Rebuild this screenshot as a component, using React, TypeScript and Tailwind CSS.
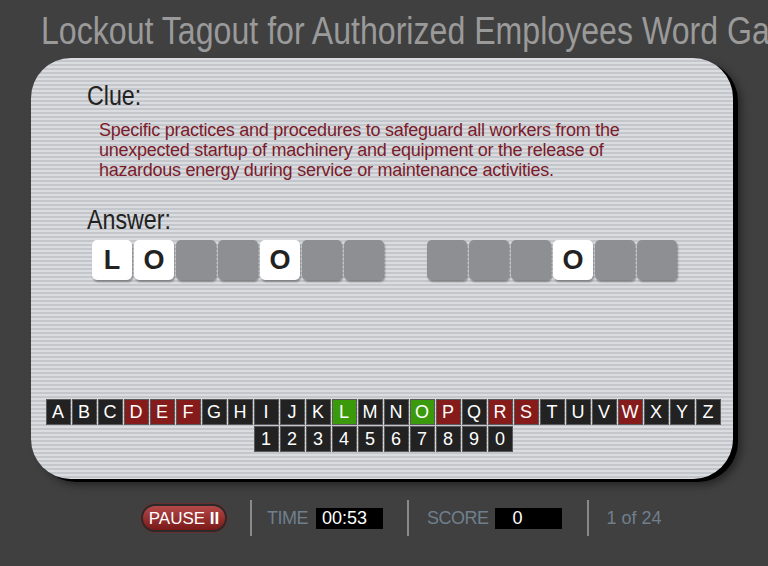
import React from 'react';

const clue =
  'Specific practices and procedures to safeguard all workers from the unexpected startup of machinery and equipment or the release of hazardous energy during service or maintenance activities.';

// answer words, null = still hidden
const words: (string | null)[][] = [
  ['L', 'O', null, null, 'O', null, null],
  [null, null, null, 'O', null, null],
];

const wrong = ['D', 'E', 'F', 'P', 'R', 'S', 'W'];
const right = ['L', 'O'];
const letters = 'ABCDEFGHIJKLMNOPQRSTUVWXYZ'.split('');
const digits = '1234567890'.split('');

const Key: React.FC<{ ch: string }> = ({ ch }) => {
  const bg = right.includes(ch) ? 'bg-[#3a9a0c]' : wrong.includes(ch) ? 'bg-[#861b1b]' : 'bg-[#222222]';
  return (
    <div className={`w-[25px] h-[26px] ${bg} border border-[#5a5a5a] flex items-center justify-center text-white text-[18px] leading-none`}>
      {ch}
    </div>
  );
};

const Tile: React.FC<{ ch: string | null }> = ({ ch }) =>
  ch ? (
    <div className="w-[40px] h-[40px] rounded-[5px] bg-white shadow-[1px_2px_2px_rgba(0,0,0,0.35)] flex items-center justify-center text-[27px] font-bold text-[#222]">
      {ch}
    </div>
  ) : (
    <div className="w-[40px] h-[40px] rounded-[5px] bg-[#8d8f92] shadow-[1px_2px_2px_rgba(0,0,0,0.35)]" />
  );

export default function App() {
  return (
    <div className="w-[768px] h-[566px] bg-[#404040] overflow-hidden font-['Liberation_Sans',Arial,sans-serif]">
      {/* title, narrow face */}
      <div className="h-[58px] pl-[41px] pt-[10px] whitespace-nowrap overflow-hidden">
        <span className="inline-block origin-left scale-x-[0.845] text-[38px] leading-[42px] text-[#9a9a9a]">
          Lockout Tagout for Authorized Employees Word Game
        </span>
      </div>

      {/* game board */}
      <div className="ml-[31px] w-[702px] h-[421px] rounded-[40px] shadow-[5px_3px_0_#000,8px_6px_8px_rgba(0,0,0,0.45)] bg-[repeating-linear-gradient(180deg,#dadcdf_0px,#dadcdf_2px,#c3c6ca_2px,#c3c6ca_4px)] pt-[23px] pl-[56px] flex flex-col">
        <div className="origin-left scale-x-[0.86] text-[27px] leading-[30px] text-[#222]">Clue:</div>
        <p className="mt-[9px] ml-[12px] w-[560px] text-[18px] tracking-[-0.25px] leading-[20px] text-[#7b1a2a]">{clue}</p>
        <div className="mt-[25px] origin-left scale-x-[0.86] text-[27px] leading-[30px] text-[#222]">Answer:</div>
        <div className="mt-[5px] ml-[5px] flex gap-[43px]">
          {words.map((w, i) => (
            <div key={i} className="flex gap-[2px]">
              {w.map((ch, j) => (
                <Tile key={j} ch={ch} />
              ))}
            </div>
          ))}
        </div>

        {/* letter picker */}
        <div className="mt-[119px] -ml-[54px] flex flex-col items-center gap-px">
          <div className="flex gap-px">
            {letters.map((c) => (
              <Key key={c} ch={c} />
            ))}
          </div>
          <div className="flex gap-px">
            {digits.map((c) => (
              <Key key={c} ch={c} />
            ))}
          </div>
        </div>
      </div>

      {/* status bar */}
      <div className="mt-[21px] pl-[141px] flex items-center text-[18px]">
        <button className="w-[86px] h-[28px] rounded-full bg-gradient-to-b from-[#b54848] to-[#7a1818] border-2 border-[#2a2a2a] shadow-[0_0_0_1px_#6a3030] text-white text-[17px] leading-none">
          PAUSE <span className="font-bold">II</span>
        </button>
        <div className="ml-[23px] w-[2px] h-[36px] bg-[#8a8a8a]" />
        <span className="ml-[15px] text-[#6f7f8e] tracking-[-0.5px]">TIME</span>
        <div className="ml-[8px] w-[67px] h-[21px] bg-black text-white text-[18px] leading-[21px] pl-[6px]">00:53</div>
        <div className="ml-[24px] w-[2px] h-[36px] bg-[#8a8a8a]" />
        <span className="ml-[18px] text-[#6f7f8e] tracking-[-0.5px]">SCORE</span>
        <div className="ml-[6px] w-[67px] h-[21px] bg-black text-white text-[18px] leading-[21px] pl-[18px]">0</div>
        <div className="ml-[25px] w-[2px] h-[36px] bg-[#8a8a8a]" />
        <span className="ml-[18px] text-[#6f7f8e]">1 of 24</span>
      </div>
    </div>
  );
}
